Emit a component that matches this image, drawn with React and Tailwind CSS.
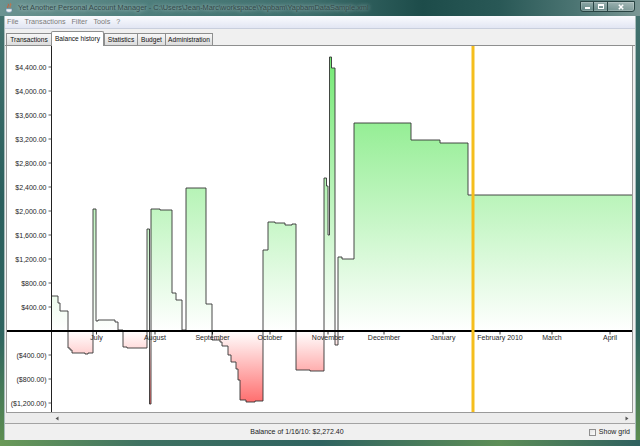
import React from 'react';

// step data of the balance curve, in page pixels: [x where the level starts, y of the level]
const steps = [
  [51.5, 296], [58, 303], [60, 311], [68, 348], [70, 350], [72, 353], [85, 354], [88, 353],
  [93, 209], [96, 321], [98, 320], [115, 322], [118, 330], [123, 347], [127, 348],
  [147, 229], [149.5, 404], [151, 209], [160, 210], [172, 293], [176, 300], [182, 330],
  [186, 188], [206, 304], [212, 340], [220, 342], [222, 346], [228, 355], [231, 362],
  [236, 369], [238, 380], [240, 400], [246, 402], [255, 401], [263, 250], [268, 222],
  [275, 223], [285, 225], [292, 224], [296, 370], [310, 371], [324, 178], [326.5, 186],
  [328, 235], [329.5, 57], [331.5, 68], [335, 345], [338, 257], [342, 259], [354, 123],
  [411, 140], [440, 143], [468, 195],
];
const ZERO = 331;
const END = 632;

const months = [
  ['July', 96.5], ['August', 155], ['September', 212.5], ['October', 270], ['November', 328],
  ['December', 384], ['January', 443], ['February 2010', 500], ['March', 552], ['April', 610],
];

const values = [4400, 4000, 3600, 3200, 2800, 2400, 2000, 1600, 1200, 800, 400, -400, -800, -1200];

function money(v) {
  const n = Math.abs(v);
  const s = n >= 1000 ? `${Math.floor(n / 1000)},${String(n % 1000).padStart(3, '0')}` : String(n);
  return v < 0 ? `($${s}.00)` : `$${s}.00`;
}

function Chart() {
  const [x0, y0] = steps[0];
  const seg = steps.slice(1).map(([x, y]) => `H${x} V${y}`).join(' ') + ` H${END}`;
  const line = `M${x0},${y0} ${seg}`;
  const area = `M${x0},${ZERO} V${y0} ${seg} V${ZERO} Z`;

  return (
    <svg width="625" height="366" viewBox="7 46 625 366" className="block">
      <defs>
        <linearGradient id="bal" gradientUnits="userSpaceOnUse" x1="0" y1="46" x2="0" y2="412">
          <stop offset="0" stopColor="#6ee86e" />
          <stop offset="0.7787" stopColor="#ffffff" />
          <stop offset="1" stopColor="#ff5a5a" />
        </linearGradient>
      </defs>
      <path d={area} fill="url(#bal)" />
      <path d={line} fill="none" stroke="#333" strokeWidth="0.9" />

      {/* y axis */}
      <line x1="51.5" y1="46" x2="51.5" y2="412" stroke="#222" strokeWidth="1" />
      {values.map((v) => {
        const y = ZERO - v * 0.06;
        return (
          <g key={v}>
            <line x1="48.5" y1={y} x2="51.5" y2={y} stroke="#333" strokeWidth="0.8" />
            <text x="46.5" y={y + 2.5} textAnchor="end" fontSize="7" fill="#1e1e1e">{money(v)}</text>
          </g>
        );
      })}

      {/* x axis */}
      <line x1="7" y1={ZERO} x2={END} y2={ZERO} stroke="#000" strokeWidth="2" />
      {months.map(([m, x]) => (
        <g key={m}>
          <line x1={x} y1={ZERO} x2={x} y2={ZERO + 3.5} stroke="#000" strokeWidth="0.8" />
          <text x={x} y={ZERO + 9} textAnchor="middle" fontSize="7" fill="#1e1e1e">{m}</text>
        </g>
      ))}

      {/* current date marker */}
      <line x1="473" y1="46" x2="473" y2="412" stroke="#f5be1c" strokeWidth="3" />
    </svg>
  );
}

function Tab({ label, width, selected }) {
  if (selected) {
    return (
      <div
        className="relative z-10 -mb-px h-[15px] flex items-center justify-center pb-[1px] bg-white border-t border-x border-[#8e8f8f] rounded-t-[2px] text-[6.6px] text-[#111]"
        style={{ width }}
      >
        {label}
      </div>
    );
  }
  return (
    <div
      className="h-[12px] flex items-center justify-center border-t border-l border-[#8e8f8f] bg-gradient-to-b from-[#f7f7f7] to-[#dcdcdc] text-[6.6px] text-[#111] last:border-r"
      style={{ width }}
    >
      {label}
    </div>
  );
}

export default function App() {
  return (
    <div className="w-[640px] h-[446px] flex flex-col overflow-hidden font-['Liberation_Sans',Arial,sans-serif] bg-[linear-gradient(180deg,#44736f_0%,#2b5f5d_45%,#2f6460_75%,#5f8f50_100%)]">
      {/* title bar */}
      <div className="h-[16px] flex items-start bg-[linear-gradient(90deg,#6b9391_0%,#4e7e7c_22%,#3f6f6d_48%,#1d4c4a_66%,#295856_78%,#4c7573_90%,#7b9795_100%)]">
        <svg width="9" height="10" viewBox="0 0 9 10" className="ml-[5px] mt-[3px]">
          <path d="M3 0.8 q1.2 1 0 2.2 q-1 1 0 2" stroke="#d9532b" strokeWidth="0.9" fill="none" />
          <path d="M5.3 0.3 q1.2 1.2 0 2.4 q-1 1 0 2" stroke="#e66a2e" strokeWidth="0.9" fill="none" />
          <path d="M1 5.8 h6 v1.4 q0 2.2 -3 2.2 q-3 0 -3 -2.2 z" fill="#eef2f4" stroke="#5a7fa0" strokeWidth="0.6" />
        </svg>
        <div className="ml-[4px] mt-[3px] text-[7.4px] leading-[10px] text-[#34494a] [text-shadow:0_0_4px_rgba(225,238,238,0.9)] whitespace-nowrap">
          Yet Another Personal Account Manager - C:\Users\Jean-Marc\workspace\Yapbam\YapbamDataSample.xml
        </div>
        <div className="ml-auto mr-[5px] mt-[1px] flex h-[11px] rounded-b-[3px] border border-[#294443] overflow-hidden shadow-[inset_0_0_0_1px_rgba(255,255,255,0.2)]">
          <div className="w-[13px] flex items-end justify-center pb-[2px] border-r border-[#294443] bg-[linear-gradient(180deg,rgba(255,255,255,0.35),rgba(255,255,255,0.08))]">
            <div className="w-[5px] h-[2px] bg-white" />
          </div>
          <div className="w-[14px] flex items-center justify-center border-r border-[#294443] bg-[linear-gradient(180deg,rgba(255,255,255,0.35),rgba(255,255,255,0.08))]">
            <div className="w-[6px] h-[5px] border border-white border-t-2" />
          </div>
          <div className="w-[26px] flex items-center justify-center bg-[linear-gradient(180deg,rgba(255,255,255,0.35),rgba(255,255,255,0.08))]">
            <svg width="6" height="6" viewBox="0 0 6 6">
              <path d="M0.8 0.8 L5.2 5.2 M5.2 0.8 L0.8 5.2" stroke="#fff" strokeWidth="1.5" />
            </svg>
          </div>
        </div>
      </div>

      {/* window body */}
      <div className="flex flex-1 min-h-0">
        <div className="w-[4px]" />
        <div className="w-[1px] bg-[#a9bcbb]" />
        <div className="w-[630px] flex flex-col bg-[#f0f0f0]">
          {/* menu bar */}
          <div className="h-[13px] flex items-center gap-[6px] pl-[2px] text-[7.2px] text-[#7b7b7b] bg-gradient-to-b from-[#fafbfe] to-[#e2e6f3] border-b border-[#c9cfdd]">
            <span>File</span>
            <span>Transactions</span>
            <span>Filter</span>
            <span>Tools</span>
            <span>?</span>
          </div>

          {/* tabs */}
          <div className="h-[17px] flex items-end pl-[1px] border-b border-[#8e8f8f]">
            <Tab label="Transactions" width={45} />
            <Tab label="Balance history" width={53} selected />
            <Tab label="Statistics" width={33} />
            <Tab label="Budget" width={28} />
            <Tab label="Administration" width={48} />
          </div>

          {/* chart panel */}
          <div className="flex pl-[1px] pr-[2px]">
            <div className="w-[627px] border-x border-b border-[#9a9a9a] bg-white">
              <Chart />
            </div>
          </div>

          {/* horizontal scrollbar */}
          <div className="h-[10px] flex items-center justify-between pl-[50px] pr-[6px] bg-[#ececec]">
            <svg width="4" height="5" viewBox="0 0 4 5"><path d="M3.5 0.5 L0.5 2.5 L3.5 4.5 Z" fill="#555" /></svg>
            <svg width="4" height="5" viewBox="0 0 4 5"><path d="M0.5 0.5 L3.5 2.5 L0.5 4.5 Z" fill="#555" /></svg>
          </div>

          {/* status bar */}
          <div className="h-[17px] border-t border-[#a3a3a3] flex items-center text-[7px] text-[#222]">
            <div className="flex-1 text-center">Balance of 1/16/10: $2,272.40</div>
            <div className="flex items-center gap-[3px] pr-[5px]">
              <div className="w-[7px] h-[7px] border border-[#8f8f8f] bg-gradient-to-br from-[#e4e4e4] to-[#fbfbfb]" />
              <span>Show grid</span>
            </div>
          </div>
        </div>
        <div className="w-[1px] bg-[#a9bcbb]" />
        <div className="w-[4px]" />
      </div>

      {/* bottom frame */}
      <div className="h-[6px] bg-[linear-gradient(90deg,#6a9a58_0%,#3f7262_22%,#2f6360_50%,#5d8e57_78%,#2f605f_100%)]" />
    </div>
  );
}
